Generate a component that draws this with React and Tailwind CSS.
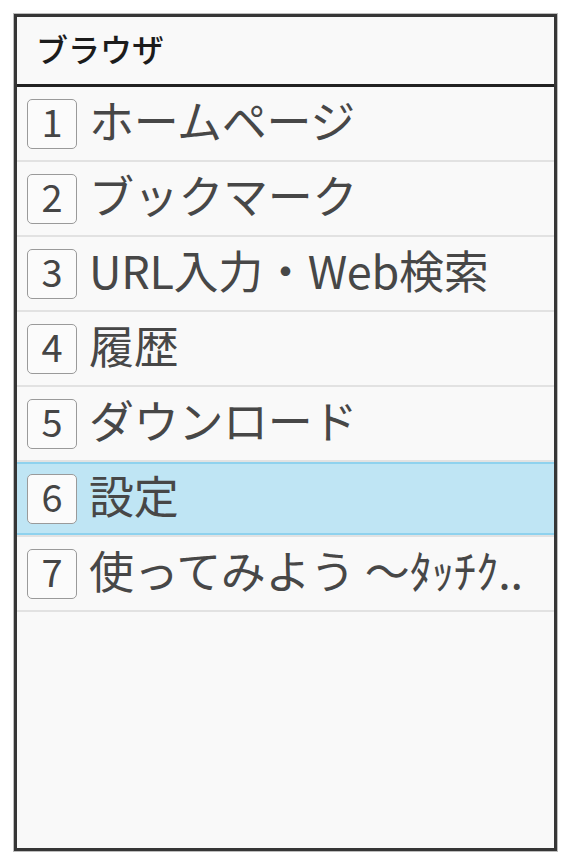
import React from 'react'

const items = [
  { no: 1, label: 'ホームページ' },
  { no: 2, label: 'ブックマーク' },
  { no: 3, label: 'URL入力・Web検索' },
  { no: 4, label: '履歴' },
  { no: 5, label: 'ダウンロード' },
  { no: 6, label: '設定', active: true },
  { no: 7, label: '使ってみよう ～ﾀｯﾁｸ..' },
]

const MenuRow = ({ no, label, active }) => {
  return (
    <div
      className={
        'flex items-center h-[75px] border-b-2 border-[#e2e2e2] pl-[10px] ' +
        (active ? 'bg-[#bfe5f4] shadow-[inset_0_2px_0_#8fd2ee,inset_0_-2px_0_#8fd2ee]' : '')
      }
    >
      <div className="w-[50px] h-[50px] flex items-center justify-center pb-[5px] rounded-[5px] border border-[#9a9a9a] bg-[#fbfbfb] text-[38px] leading-none text-[#454545]">
        {no}
      </div>
      <span className="ml-[12px] mb-[8px] text-[45px] tracking-[-0.3px] leading-none text-[#474747] whitespace-nowrap">{label}</span>
    </div>
  )
}

export default function App() {
  return (
    <div className="w-[570px] h-[864px] bg-white pt-[13px] pl-[13px]" style={{ fontFamily: '"Noto Sans CJK JP", "Noto Sans", sans-serif' }}>
      <div className="w-[545px] h-[839px] border border-[#bdbdbd]">
        <div className="w-full h-full border-[3px] border-[#363636] bg-[#f9f9f9] flex flex-col">
          <div className="h-[70px] border-b-[3px] border-[#222] flex items-center pl-[19px] pb-[6px]">
            <span className="text-[32px] leading-none font-medium text-[#1c1c1c]">ブラウザ</span>
          </div>
          {items.map((it) => (
            <MenuRow key={it.no} {...it} />
          ))}
        </div>
      </div>
    </div>
  )
}
